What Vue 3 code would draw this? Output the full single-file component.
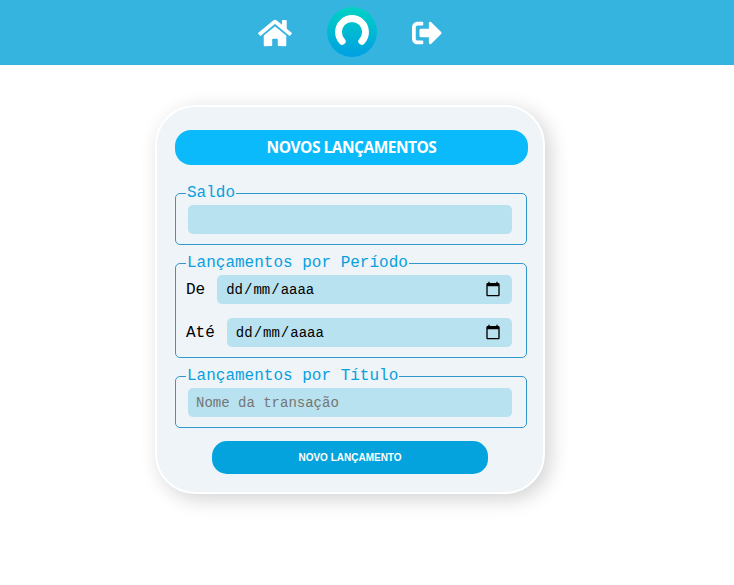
<script setup>
const dates = ['De', 'Até']
</script>

<template>
  <div class="page">
    <header class="topbar">
      <nav class="nav">
        <svg class="home" viewBox="0 0 576 512" fill="#fff"><path d="M280.37 148.26L96 300.11V464a16 16 0 0 0 16 16l112.06-.29a16 16 0 0 0 15.92-16V368a16 16 0 0 1 16-16h64a16 16 0 0 1 16 16v95.64a16 16 0 0 0 16 16.05L464 480a16 16 0 0 0 16-16V300L295.67 148.26a12.19 12.19 0 0 0-15.3 0zM571.6 251.47L488 182.56V44.05a12 12 0 0 0-12-12h-56a12 12 0 0 0-12 12v72.61L318.47 43a48 48 0 0 0-61 0L4.34 251.47a12 12 0 0 0-1.6 16.9l25.5 31A12 12 0 0 0 45.15 301l235.22-193.74a12.19 12.19 0 0 1 15.3 0L530.9 301a12 12 0 0 0 16.9-1.6l25.5-31a12 12 0 0 0-1.7-16.93z" /></svg>
        <svg class="logo" viewBox="0 0 50 50">
          <defs>
            <linearGradient id="logoFill" x1="0" y1="0" x2="0" y2="1">
              <stop offset="0" stop-color="#00d2c3" />
              <stop offset="1" stop-color="#009fe3" />
            </linearGradient>
          </defs>
          <circle cx="25" cy="25" r="25" fill="url(#logoFill)" />
          <path d="M15.200 34.300A13.500 13.500 0 1 1 34.800 34.300" fill="none" stroke="#fff" stroke-width="6.900" stroke-linecap="round" />
        </svg>
        <svg class="exit" viewBox="0 0 512 512" fill="#fff"><path d="M497 273L329 441c-15 15-41 4.500-41-17v-96H152c-13.300 0-24-10.700-24-24v-96c0-13.300 10.700-24 24-24h136V88c0-21.400 25.900-32 41-17l168 168c9.300 9.400 9.300 24.600 0 34zM192 436v-40c0-6.600-5.400-12-12-12H96c-17.700 0-32-14.300-32-32V160c0-17.700 14.300-32 32-32h84c6.600 0 12-5.400 12-12V76c0-6.600-5.400-12-12-12H96c-53 0-96 43-96 96v192c0 53 43 96 96 96h84c6.600 0 12-5.400 12-12z" /></svg>
      </nav>
    </header>
    <main class="content">
      <section class="card">
        <h1 class="title">NOVOS LANÇAMENTOS</h1>
        <fieldset class="group">
          <legend>Saldo</legend>
          <div class="field inset"></div>
        </fieldset>
        <fieldset class="group period">
          <legend>Lançamentos por Período</legend>
          <div v-for="label in dates" :key="label" class="row">
            <label>{{ label }}</label>
            <div class="field date">
              <span class="parts"><span>dd</span>/<span>mm</span>/<span>aaaa</span></span>
              <svg class="calendar" viewBox="0 0 24 24"><path d="M20 3h-1V1h-2v2H7V1H5v2H4c-1.100 0-2 .9-2 2v16c0 1.100.9 2 2 2h16c1.100 0 2-.9 2-2V5c0-1.100-.9-2-2-2zm0 18H4V8h16v13z" /></svg>
            </div>
          </div>
        </fieldset>
        <fieldset class="group">
          <legend>Lançamentos por Título</legend>
          <input class="field inset" type="text" placeholder="Nome da transação">
        </fieldset>
        <button class="submit" type="button">NOVO LANÇAMENTO</button>
      </section>
    </main>
  </div>
</template>

<style>
body {
  background: #fff;
}
</style>

<style scoped>
.page {
  width: 100%;
  height: 585px;
  overflow: hidden;
  font-family: "Liberation Mono", "Courier New", monospace;
}
.topbar {
  height: 65px;
  background: #36b4e0;
}
.nav {
  width: 700px;
  height: 65px;
  display: flex;
  justify-content: center;
  align-items: center;
  gap: 35px;
}
.home {
  width: 34px;
  height: 30px;
}
.logo {
  width: 50px;
  height: 50px;
  margin-bottom: 1px;
}
.exit {
  width: 30px;
  height: 30px;
}
.content {
  width: 700px;
  padding-top: 40px;
}
.card {
  box-sizing: border-box;
  width: 390px;
  height: 389px;
  margin: 0 auto;
  padding: 23px 15px 0 18px;
  border: 2px solid #fff;
  border-radius: 40px;
  background: #eef4f7;
  box-shadow: 5px 5px 20px rgba(0, 0, 0, 0.18);
}
.title {
  width: 353px;
  height: 35px;
  margin: 0 0 19px;
  border-radius: 16px;
  background: #0abafb;
  color: #fff;
  font: 700 15.5px/35px "Open Sans", "Noto Sans", sans-serif;
  letter-spacing: -0.5px;
  text-align: center;
}
.group {
  box-sizing: border-box;
  width: 352px;
  height: 61px;
  min-width: 0;
  margin: 0 0 9px;
  padding: 3px 14px 0 10px;
  border: 1px solid #3298cb;
  border-radius: 5px;
}
.period {
  height: 104px;
}
legend {
  padding: 0 1px;
  color: #08a0df;
  font-size: 16px;
  line-height: 18px;
}
.field {
  box-sizing: border-box;
  height: 29px;
  border: 0;
  border-radius: 5px;
  background: #b8e2ef;
  font: 14px "Liberation Mono", "Courier New", monospace;
}
.inset {
  display: block;
  width: 324px;
  margin-left: 2px;
  padding: 0 8px;
}
.inset::placeholder {
  color: #757575;
}
.row {
  display: flex;
  align-items: center;
  gap: 12px;
  margin-bottom: 14px;
  font-size: 16px;
}
.date {
  flex: 1;
  display: flex;
  align-items: center;
  justify-content: space-between;
  padding: 0 11px 1px 8px;
}
.parts {
  padding-top: 1px;
}
.parts span {
  padding: 0 1px;
}
.calendar {
  width: 16px;
  height: 16px;
}
.submit {
  display: block;
  width: 276px;
  height: 33px;
  margin: 13px 0 0 37px;
  padding: 0;
  border: 0;
  border-radius: 15px;
  background: #04a3dd;
  color: #fff;
  font: 700 10px "Liberation Sans", Arial, sans-serif;
}
</style>
